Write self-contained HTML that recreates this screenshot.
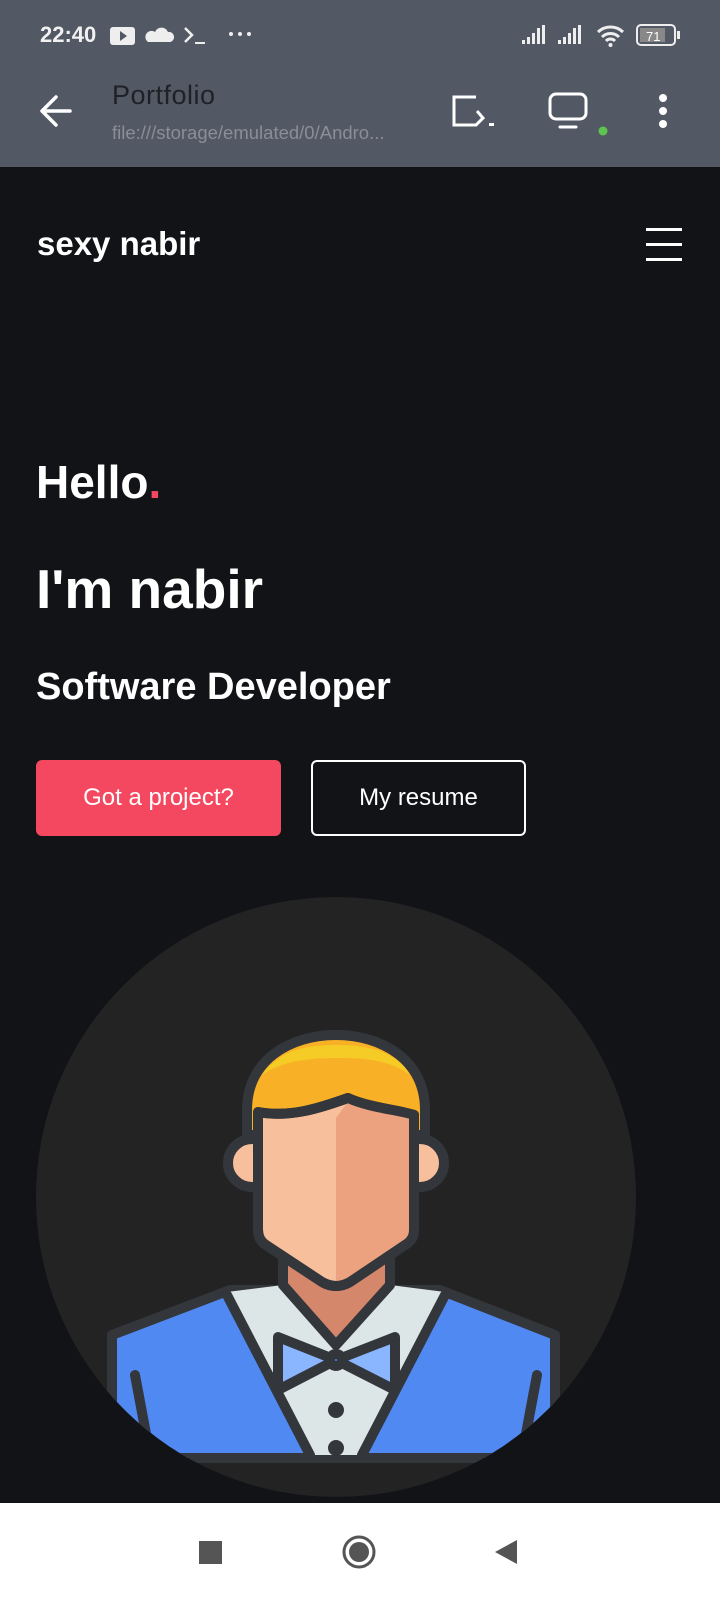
<!DOCTYPE html>
<html><head><meta charset="utf-8"><style>
*{margin:0;padding:0;box-sizing:border-box}
body{width:720px;height:1600px;overflow:hidden;background:#121317;font-family:"Liberation Sans",Roboto,sans-serif;position:relative;color:#fff}
.abs{position:absolute}
#top{left:0;top:0;width:720px;height:167px;background:#525864}
.btn{position:absolute;top:760px;height:76px;border-radius:6px;font-size:24px;display:flex;align-items:center;justify-content:center}
</style></head><body>
<div id="top" class="abs"></div>
<div class="abs" style="left:40px;top:22px;font-size:22px;font-weight:bold;color:#f1f1f1">22:40</div>
<svg class="abs" style="left:0;top:0" width="720" height="167">
 <rect x="110" y="27" width="25" height="18" rx="3" fill="#eee"/><path d="M120 31 L127 36 L120 41Z" fill="#525864"/>
 <path d="M148 42 H170 a5 5 0 0 0 -2 -10 a7 7 0 0 0 -13 0 a5 5 0 0 0 -7 10Z" fill="#eee"/>
 <path d="M185 28 L192 35 L185 42" stroke="#eee" stroke-width="2.5" fill="none"/><path d="M195 43 H205" stroke="#eee" stroke-width="2"/>
 <circle cx="231" cy="34" r="2" fill="#eee"/><circle cx="240" cy="34" r="2" fill="#eee"/><circle cx="249" cy="34" r="2" fill="#eee"/>
 <g fill="#eee"><rect x="522" y="40" width="3" height="4"/><rect x="527" y="37" width="3" height="7"/><rect x="532" y="33" width="3" height="11"/><rect x="537" y="28" width="3" height="16"/><rect x="542" y="25" width="3" height="19"/>
 <rect x="558" y="40" width="3" height="4"/><rect x="563" y="37" width="3" height="7"/><rect x="568" y="33" width="3" height="11"/><rect x="573" y="28" width="3" height="16"/><rect x="578" y="25" width="3" height="19"/></g>
 <path d="M598 32 a18 18 0 0 1 25 0 M602 37 a12 12 0 0 1 17 0 M606 41 a6 6 0 0 1 9 0" stroke="#eee" stroke-width="3" fill="none"/><circle cx="610.5" cy="45" r="2" fill="#eee"/>
 <rect x="637" y="25" width="38" height="20" rx="4" stroke="#eee" stroke-width="2" fill="none"/><rect x="640" y="28" width="25" height="14" fill="#888"/><rect x="677" y="31" width="3" height="8" fill="#eee"/>
 <text x="646" y="41" font-size="13" fill="#fff" font-family="Liberation Sans">71</text>
 <path d="M70 111 H43 M56 97 L42 111 L56 125" stroke="#fff" stroke-width="3.5" fill="none" stroke-linecap="round" stroke-linejoin="round"/>
 <path d="M476 97 H454 V125 H476 L483 118 L477 111" stroke="#fff" stroke-width="3" fill="none"/><rect x="489" y="123" width="5" height="3" fill="#fff"/>
 <rect x="550" y="94" width="36" height="25" rx="6" stroke="#fff" stroke-width="3" fill="none"/><path d="M560 127 H576" stroke="#fff" stroke-width="3" stroke-linecap="round"/>
 <circle cx="603" cy="131" r="4.5" fill="#5fc44f"/>
 <circle cx="663" cy="98" r="4" fill="#fff"/><circle cx="663" cy="111" r="4" fill="#fff"/><circle cx="663" cy="124" r="4" fill="#fff"/>
</svg>
<div class="abs" style="left:112px;top:80px;font-size:27px;color:#1f2126;letter-spacing:0.5px">Portfolio</div>
<div class="abs" style="left:112px;top:122px;font-size:18.5px;color:#8a8e97">file:///storage/emulated/0/Andro...</div>

<div class="abs" style="left:37px;top:225px;font-size:33px;font-weight:bold">sexy nabir</div>
<div class="abs" style="left:646px;top:228px;width:36px;height:3px;background:#fff"></div>
<div class="abs" style="left:646px;top:243px;width:36px;height:3px;background:#fff"></div>
<div class="abs" style="left:646px;top:258px;width:36px;height:3px;background:#fff"></div>

<div class="abs" style="left:36px;top:455px;font-size:46px;font-weight:bold">Hello<span style="color:#f44860">.</span></div>
<div class="abs" style="left:36px;top:557px;font-size:55px;font-weight:bold">I'm nabir</div>
<div class="abs" style="left:36px;top:666px;font-size:38px;font-weight:bold">Software Developer</div>
<div class="btn" style="left:36px;width:245px;background:#f44860">Got a project?</div>
<div class="btn" style="left:311px;width:215px;border:2px solid #fff">My resume</div>

<svg class="abs" style="left:0;top:0" width="720" height="1600">
 <defs><clipPath id="c"><circle cx="336" cy="1197" r="300"/></clipPath></defs>
 <circle cx="336" cy="1197" r="300" fill="#232323"/>
 <g clip-path="url(#c)" stroke="#33363b" stroke-width="10" stroke-linejoin="round" stroke-linecap="round">
  <path d="M112 1335 L230 1290 L440 1290 L555 1335 V1458 H112Z" fill="#5189f3"/>
  <path d="M227 1292 L283 1285 L336 1340 L390 1285 L445 1292 L360 1455 L312 1455Z" fill="#dde6e6" stroke="none"/>
  <path d="M283 1245 L390 1245 L390 1285 L336 1345 L283 1285Z" fill="#d4876b"/>
  <path d="M227 1295 L310 1455 M445 1295 L362 1455" fill="none"/>
  <path d="M247 1135 V1110 C247 1060 290 1035 336 1035 C382 1035 425 1060 425 1110 V1135Z" fill="#f8b026"/>
  <path d="M262 1075 C280 1050 305 1045 336 1045 C367 1045 395 1050 410 1075 C390 1060 365 1058 336 1058 C307 1058 280 1062 262 1075Z" fill="#f5cb25" stroke="none"/>
  <circle cx="252" cy="1163" r="24" fill="#f7bf9c"/><circle cx="420" cy="1163" r="24" fill="#f7bf9c"/>
  <path d="M258 1112 C290 1118 320 1108 348 1098 C370 1108 400 1110 414 1115 V1230 Q414 1240 405 1245 L350 1282 Q336 1290 322 1282 L266 1245 Q258 1240 258 1230Z" fill="#f7bf9c"/>
  <path d="M336 1118 L348 1102 C370 1108 400 1110 410 1117 V1230 Q410 1238 402 1243 L348 1280 Q340 1285 336 1284Z" fill="#eca27e" stroke="none"/>
  <path d="M258 1112 C290 1118 320 1108 348 1098 C370 1108 400 1110 414 1115 V1230 Q414 1240 405 1245 L350 1282 Q336 1290 322 1282 L266 1245 Q258 1240 258 1230Z" fill="none"/>
  <path d="M278 1337 L336 1360 L278 1390Z M395 1337 L336 1360 L395 1390Z" fill="#8ab5ff"/>
  <circle cx="336" cy="1360" r="6" fill="#5189f3"/>
  <path d="M135 1375 L150 1455 M537 1375 L522 1455" fill="none"/>
  <circle cx="336" cy="1410" r="3" fill="#33363b"/><circle cx="336" cy="1448" r="3" fill="#33363b"/>
 </g>
</svg>

<div class="abs" style="left:0;top:1503px;width:720px;height:97px;background:#fff"></div>
<svg class="abs" style="left:0;top:1503px" width="720" height="97">
 <rect x="199" y="38" width="23" height="23" fill="#555"/>
 <circle cx="359" cy="49" r="15" stroke="#555" stroke-width="3" fill="none"/><circle cx="359" cy="49" r="10" fill="#555"/>
 <path d="M517 37 V61 L495 49Z" fill="#555"/>
</svg>
</body></html>
